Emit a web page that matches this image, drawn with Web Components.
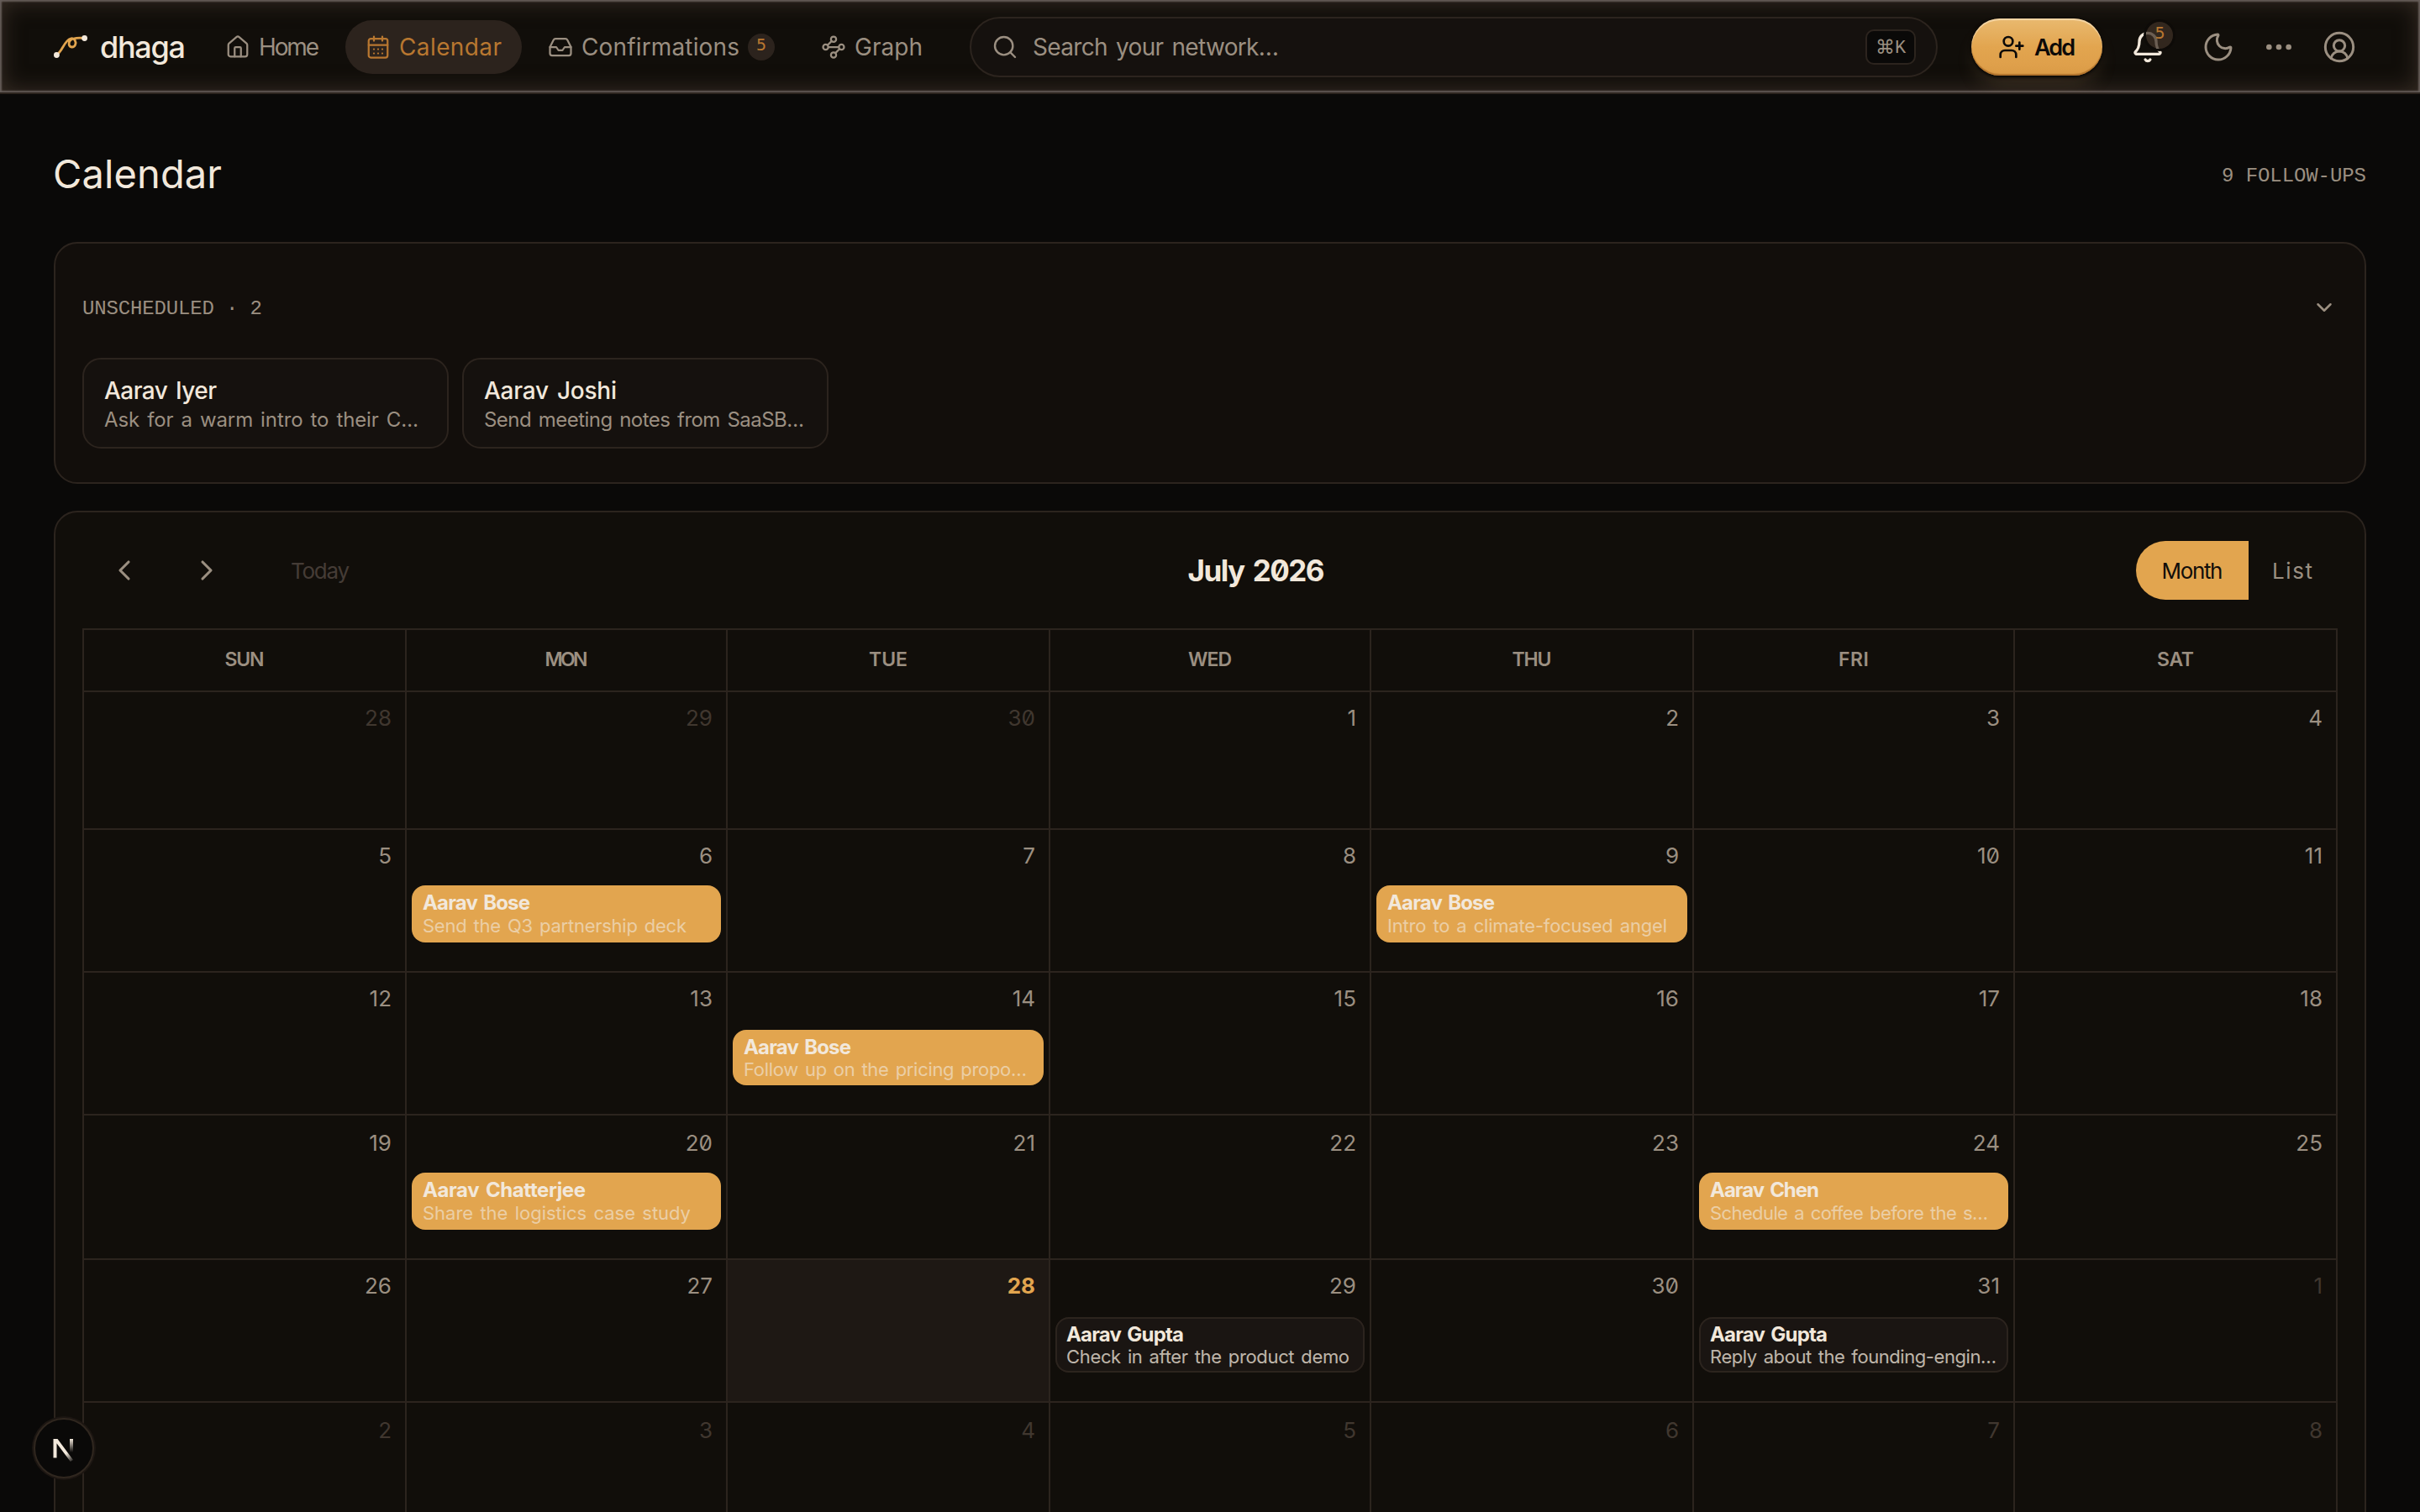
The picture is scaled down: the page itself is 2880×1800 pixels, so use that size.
<!DOCTYPE html>
<html lang="en">
<head>
<meta charset="utf-8">
<title>dhaga - Calendar</title>
<style>
  :root {
    --bg: #0a0908;
    --card: #110e0a;
    --raised: #15110e;
    --line: #2c241e;
    --text: #f2e8db;
    --muted: #9b8f81;
    --faint: #40372f;
    --amber: #e2a54f;
    --amber-dim: #b87730;
  }
  html, body {
    margin: 0;
    height: 1800px;
    overflow: hidden;
    background: var(--bg);
    color: var(--text);
    font-family: Inter, "Liberation Sans", sans-serif;
    font-feature-settings: "zero";
  }
</style>
</head>
<body>
<dhaga-app></dhaga-app>

<script>
const ICONS = {
  home: '<path d="M15 21v-8a1 1 0 0 0-1-1h-4a1 1 0 0 0-1 1v8"/><path d="M3 10a2 2 0 0 1 .709-1.528l7-5.999a2 2 0 0 1 2.582 0l7 5.999A2 2 0 0 1 21 10v9a2 2 0 0 1-2 2H5a2 2 0 0 1-2-2z"/>',
  calendar: '<path d="M8 2v4M16 2v4"/><rect width="18" height="18" x="3" y="4" rx="2"/><path d="M3 10h18M8 14h.01M12 14h.01M16 14h.01M8 18h.01M12 18h.01M16 18h.01"/>',
  inbox: '<path d="M22 12h-6l-2 3h-4l-2-3H2"/><path d="M5.45 5.11 2 12v6a2 2 0 0 0 2 2h16a2 2 0 0 0 2-2v-6l-3.45-6.89A2 2 0 0 0 16.76 4H7.24a2 2 0 0 0-1.79 1.11z"/>',
  graph: '<circle cx="12" cy="4.5" r="2.5"/><path d="m10.2 6.3-3.9 3.9"/><circle cx="4.5" cy="12" r="2.5"/><path d="M7 12h10"/><circle cx="19.5" cy="12" r="2.5"/><path d="m13.8 17.7 3.9-3.9"/><circle cx="12" cy="19.5" r="2.5"/>',
  search: '<path d="m21 21-4.34-4.34"/><circle cx="11" cy="11" r="8"/>',
  userPlus: '<path d="M16 21v-2a4 4 0 0 0-4-4H6a4 4 0 0 0-4 4v2"/><circle cx="9" cy="7" r="4"/><path d="M19 8v6M22 11h-6"/>',
  bell: '<path d="M10.268 21a2 2 0 0 0 3.464 0"/><path d="M3.262 15.326A1 1 0 0 0 4 17h16a1 1 0 0 0 .74-1.673C19.41 13.956 18 12.499 18 8A6 6 0 0 0 6 8c0 4.499-1.411 5.956-2.738 7.326"/>',
  moon: '<path d="M20.985 12.486a9 9 0 1 1-9.473-9.472c.405-.022.617.46.402.803a6 6 0 0 0 8.268 8.268c.344-.215.825-.004.803.401"/>',
  dots: '<circle cx="12" cy="12" r="1"/><circle cx="19" cy="12" r="1"/><circle cx="5" cy="12" r="1"/>',
  user: '<path d="M17.925 20.056a6 6 0 0 0-11.851.001"/><circle cx="12" cy="11" r="4"/><circle cx="12" cy="12" r="10"/>',
  left: '<path d="m15 18-6-6 6-6"/>',
  right: '<path d="m9 18 6-6-6-6"/>',
  down: '<path d="m6 9 6 6 6-6"/>'
};

class UiIcon extends HTMLElement {
  constructor() {
    super();
    this.attachShadow({ mode: 'open' });
  }
  connectedCallback() {
    const size = this.getAttribute('size') || 30;
    const stroke = this.getAttribute('stroke') || 1.8;
    this.shadowRoot.innerHTML = `
      <style>
        :host { display: block; flex: none; width: ${size}px; height: ${size}px; }
        svg { display: block; }
      </style>
      <svg width="${size}" height="${size}" viewBox="0 0 24 24" fill="none" stroke="currentColor"
        stroke-width="${stroke}" stroke-linecap="round" stroke-linejoin="round">${ICONS[this.getAttribute('name')]}</svg>`;
  }
}
customElements.define('ui-icon', UiIcon);

// One line of text tracked out (or in) to fill a given width
class FitText extends HTMLElement {
  constructor() {
    super();
    this.attachShadow({ mode: 'open' });
    this.shadowRoot.innerHTML = `
      <style>
        :host { display: block; flex: none; white-space: nowrap; }
        span { display: inline-block; word-spacing: var(--word-gap, .1em); }
      </style>
      <span><slot></slot></span>`;
  }
  connectedCallback() {
    const width = Number(this.getAttribute('w'));
    const span = this.shadowRoot.querySelector('span');
    const count = this.textContent.length;
    const natural = span.getBoundingClientRect().width;
    span.style.letterSpacing = `${(width - natural) / (count - 1)}px`;
    this.style.width = `${width}px`;
  }
}
customElements.define('fit-text', FitText);

class NavItem extends HTMLElement {
  constructor() {
    super();
    this.attachShadow({ mode: 'open' });
  }
  connectedCallback() {
    const badge = this.getAttribute('badge');
    this.shadowRoot.innerHTML = `
      <style>
        :host {
          display: flex; align-items: center; gap: 10px; height: 64px; padding: 0 24px;
          border-radius: 32px; color: var(--muted); font-size: 28px; line-height: 40px;
        }
        :host([active]) { background: #2c231d; color: var(--amber-dim); }
        b {
          width: 32px; height: 32px; border-radius: 50%; background: #2c231d; color: var(--amber-dim);
          font: 500 20px/27px "DejaVu Sans Mono", monospace; text-align: center;
        }
      </style>
      <ui-icon name="${this.getAttribute('icon')}"></ui-icon>
      <fit-text w="${this.getAttribute('w')}">${this.getAttribute('label')}</fit-text>
      ${badge ? `<b>${badge}</b>` : ''}`;
  }
}
customElements.define('nav-item', NavItem);

class TopBar extends HTMLElement {
  constructor() {
    super();
    this.attachShadow({ mode: 'open' });
  }
  connectedCallback() {
    this.shadowRoot.innerHTML = `
      <style>
        :host {
          display: flex; align-items: center; box-sizing: border-box; height: 112px; overflow: hidden;
          padding: 2px 64px 0; border-bottom: 2px solid var(--line); background: #110e0a;
          box-shadow: inset 0 0 2px 2px rgba(122, 112, 110, .75), inset 0 0 26px 3px rgba(84, 68, 56, .55);
        }
        .brand { display: flex; align-items: center; gap: 15px; font-size: 36px; line-height: 44px; font-weight: 500; }
        nav { display: flex; gap: 7px; margin-left: 23px; margin-right: -2px; }
        .search {
          flex: 1; display: flex; align-items: center; box-sizing: border-box; height: 72px; margin-left: 34px;
          padding: 0 24px; border: 2px solid var(--line); border-radius: 36px; background: var(--raised);
          color: var(--muted); font-size: 28px;
        }
        .search fit-text { margin-left: 17px; }
        kbd {
          display: flex; align-items: center; justify-content: center; box-sizing: border-box; width: 60px; height: 42px;
          margin-left: auto; border: 2px solid var(--line); border-radius: 10px; background: var(--bg);
          font: 22px/34px "Liberation Mono", monospace;
        }
        kbd span { font: 23px/34px "DejaVu Sans", sans-serif; }
        kbd i { font-style: normal; padding-top: 3px; }
        .add {
          display: flex; align-items: center; gap: 11px; box-sizing: border-box; width: 156px; height: 68px;
          margin-left: 40px; padding-left: 32px; border-radius: 34px; color: #0c0a08; font-size: 27px; font-weight: 600;
          background: linear-gradient(#e9b96f, #e2a54f 50%, #dfa04b 80%, #d99a46);
          box-shadow: inset 0 2px 1px rgba(255, 240, 215, .55), inset 0 -2px 1px rgba(160, 98, 34, .7),
            0 2px 4px #000, 0 16px 26px -8px rgba(200, 160, 110, .22);
        }
        .btn { position: relative; display: flex; align-items: center; justify-content: center; width: 64px; height: 64px; margin-left: 8px; color: var(--muted); }
        .bell { margin-left: 22px; color: var(--text); }
        .moon { margin-left: 20px; }
        .count {
          position: absolute; left: 30px; top: 2px; width: 32px; height: 32px; border-radius: 50%;
          background: rgba(62, 48, 38, .75); box-shadow: 0 0 0 3px #0e0b08; color: var(--amber-dim);
          font: 500 20px/27px "DejaVu Sans Mono", monospace; text-align: center; text-indent: 1px;
        }
      </style>
      <div class="brand">
        <svg width="40" height="30" viewBox="0 0 40 30" fill="none">
          <path d="M3 24.5C10 21 12.5 7 20 5c5-1.300 7 4 5.500 7.500c-1.600 3.600-7 3.300-7.400-.8C17.500 4.500 27 3.500 37 4.500" stroke="#e1a44e" stroke-width="2.800" stroke-linecap="round"/>
          <circle cx="3.400" cy="24.500" r="3.400" fill="#f2e8db"/><circle cx="36.600" cy="4.500" r="3.400" fill="#f2e8db"/>
        </svg>
        <fit-text w="102">dhaga</fit-text>
      </div>
      <nav>
        <nav-item icon="home" label="Home" w="72"></nav-item>
        <nav-item icon="calendar" label="Calendar" w="122" active></nav-item>
        <nav-item icon="inbox" label="Confirmations" w="188" badge="5"></nav-item>
        <nav-item icon="graph" label="Graph" w="81"></nav-item>
      </nav>
      <div class="search">
        <ui-icon name="search" size="32"></ui-icon>
        <fit-text w="293">Search your network…</fit-text>
        <kbd><span>⌘</span><i>K</i></kbd>
      </div>
      <div class="add"><ui-icon name="userPlus" size="32" stroke="2"></ui-icon><fit-text w="49">Add</fit-text></div>
      <div class="btn bell"><ui-icon name="bell" size="40" stroke="2"></ui-icon><span class="count">5</span></div>
      <div class="btn moon"><ui-icon name="moon" size="40"></ui-icon></div>
      <div class="btn"><ui-icon name="dots" size="40" stroke="2"></ui-icon></div>
      <div class="btn"><ui-icon name="user" size="40"></ui-icon></div>`;
  }
}
customElements.define('top-bar', TopBar);

class PersonCard extends HTMLElement {
  constructor() {
    super();
    this.attachShadow({ mode: 'open' });
    this.shadowRoot.innerHTML = `
      <style>
        :host {
          display: block; box-sizing: border-box; width: 436px; height: 108px; padding: 19px 24px 0;
          border: 2px solid var(--line); border-radius: 22px; background: var(--raised);
        }
        .name { font-size: 28px; line-height: 36px; font-weight: 500; }
        .note { font-size: 24px; line-height: 34px; color: var(--muted); }
      </style>
      <div class="name"><slot name="name"></slot></div>
      <div class="note"><slot></slot></div>`;
  }
}
customElements.define('person-card', PersonCard);

class UnscheduledPanel extends HTMLElement {
  constructor() {
    super();
    this.attachShadow({ mode: 'open' });
  }
  connectedCallback() {
    this.shadowRoot.innerHTML = `
      <style>
        :host {
          display: block; box-sizing: border-box; height: 288px; padding: 60px 32px 0;
          border: 2px solid var(--line); border-radius: 28px; background: #120e0b;
        }
        header {
          display: flex; align-items: center; justify-content: space-between; height: 32px; padding-right: 1px;
          font: 24px/32px "Liberation Mono", monospace; color: var(--muted); --word-gap: 0;
        }
        header fit-text { padding-top: 3px; }
        .row { display: flex; gap: 16px; margin-top: 44px; }
      </style>
      <header><fit-text w="214">UNSCHEDULED · 2</fit-text><ui-icon name="down" size="30" stroke="2"></ui-icon></header>
      <div class="row">
        <person-card><fit-text slot="name" w="134">Aarav Iyer</fit-text><fit-text w="374">Ask for a warm intro to their C…</fit-text></person-card>
        <person-card><fit-text slot="name" w="158">Aarav Joshi</fit-text><fit-text w="381">Send meeting notes from SaaSB…</fit-text></person-card>
      </div>`;
  }
}
customElements.define('unscheduled-panel', UnscheduledPanel);

class CalEvent extends HTMLElement {
  constructor() {
    super();
    this.attachShadow({ mode: 'open' });
  }
  connectedCallback() {
    this.shadowRoot.innerHTML = `
      <style>
        :host {
          display: block; box-sizing: border-box; height: 66px; margin: 0 6px; padding: 6px 13px 0;
          border-radius: 16px; background: var(--amber); color: #f2e8db;
        }
        :host([tall]) { height: 68px; }
        :host([upcoming]) { background: #1a1512; box-shadow: inset 0 0 0 2px var(--line); }
        .name { font-size: 24px; line-height: 30px; font-weight: 700; }
        .note { font-size: 22px; line-height: 22px; opacity: .62; }
        :host([tall]) .note { margin-top: 1px; }
        :host([upcoming]) .note { opacity: .76; }
      </style>
      <div class="name"><slot name="name"></slot></div>
      <div class="note"><slot></slot></div>`;
  }
}
customElements.define('cal-event', CalEvent);

class CalDay extends HTMLElement {
  constructor() {
    super();
    this.attachShadow({ mode: 'open' });
    this.shadowRoot.innerHTML = `
      <style>
        :host { display: block; box-sizing: border-box; min-width: 0; border-right: 2px solid var(--line); border-bottom: 2px solid var(--line); }
        :host([last]) { border-right: 0; }
        .num {
          height: 68px; padding: 14px 16px 0 0; box-sizing: border-box; text-align: right;
          font-size: 26px; line-height: 34px; color: var(--muted);
        }
        :host([early]) .num { height: 66px; }
        :host([low]) .num { padding-top: 16px; }
        :host([outside]) .num { color: var(--faint); }
        :host([today]) { background: #1e1814; }
        :host([today]) .num { color: var(--amber); font-weight: 700; }
      </style>
      <div class="num"></div><slot></slot>`;
  }
  connectedCallback() {
    this.shadowRoot.querySelector('.num').textContent = this.getAttribute('n');
  }
}
customElements.define('cal-day', CalDay);

const EVENTS = {
  '7-6': ['Aarav Bose', 128, 'Send the Q3 partnership deck', 314],
  '7-9': ['Aarav Bose', 128, 'Intro to a climate-focused angel', 333],
  '7-14': ['Aarav Bose', 128, 'Follow up on the pricing propo…', 337],
  '7-20': ['Aarav Chatterjee', 194, 'Share the logistics case study', 319],
  '7-24': ['Aarav Chen', 130, 'Schedule a coffee before the s…', 331],
  '7-29': ['Aarav Gupta', 140, 'Check in after the product demo', 337],
  '7-31': ['Aarav Gupta', 140, 'Reply about the founding-engin…', 341]
};

const WEEKDAYS = [['SUN', 47], ['MON', 51], ['TUE', 46], ['WED', 52], ['THU', 47], ['FRI', 36], ['SAT', 44]];

class MonthCalendar extends HTMLElement {
  constructor() {
    super();
    this.attachShadow({ mode: 'open' });
  }

  days() {
    const start = new Date(2026, 5, 28);
    let html = '';
    for (let i = 0; i < 42; i++) {
      const date = new Date(start.getFullYear(), start.getMonth(), start.getDate() + i);
      const month = date.getMonth() + 1;
      const n = date.getDate();
      const row = Math.floor(i / 7);
      const event = EVENTS[`${month}-${n}`];
      const flags = [
        month !== 7 ? 'outside' : '',
        month === 7 && n === 28 ? 'today' : '',
        i % 7 === 6 ? 'last' : '',
        row === 1 ? 'early' : '',
        row === 3 || row === 5 ? 'low' : ''
      ].join(' ');
      const state = `${row === 1 || row === 3 ? 'tall' : ''} ${n > 28 ? 'upcoming' : ''}`;
      html += `<cal-day n="${n}" ${flags}>${event ? `
        <cal-event ${state}><fit-text slot="name" w="${event[1]}">${event[0]}</fit-text><fit-text w="${event[3]}">${event[2]}</fit-text></cal-event>` : ''}</cal-day>`;
    }
    return html;
  }

  connectedCallback() {
    this.shadowRoot.innerHTML = `
      <style>
        :host {
          display: block; box-sizing: border-box; height: 1300px; padding: 34px 32px 0;
          border: 2px solid var(--line); border-radius: 28px; background: var(--card);
        }
        .bar { display: flex; align-items: center; justify-content: space-between; height: 70px; margin-bottom: 34px; font-size: 26px; color: var(--muted); }
        .group { display: flex; align-items: center; }
        .step { display: flex; justify-content: center; width: 98px; }
        .step:first-child { margin-left: 1px; }
        .today { padding: 0 32px 0 51px; color: #453c36; }
        h2 { margin: 0; font-size: 35px; font-weight: 700; color: var(--text); }
        .tab { display: flex; align-items: center; justify-content: center; box-sizing: border-box; height: 70px; width: 134px; }
        .tab.on { border-radius: 35px 0 0 35px; background: var(--amber); color: #110e0a; }
        .tab.list { width: 106px; padding-right: 2px; }
        .grid {
          display: grid; grid-template-columns: 384px 382px 384px 382px 384px 382px 382px;
          grid-template-rows: 74px 164px 170px 170px 172px 170px 172px;
          box-sizing: border-box; width: 2684px; border: 2px solid var(--line);
        }
        .head {
          display: flex; align-items: center; justify-content: center; border-right: 2px solid var(--line);
          border-bottom: 2px solid var(--line); font-size: 23px; font-weight: 600; color: var(--muted); padding-bottom: 3px;
        }
        .head:nth-child(7) { border-right: 0; }
      </style>
      <div class="bar">
        <div class="group">
          <div class="step"><ui-icon name="left" size="40" stroke="1.9"></ui-icon></div>
          <div class="step"><ui-icon name="right" size="40" stroke="1.9"></ui-icon></div>
          <div class="today"><fit-text w="70">Today</fit-text></div>
        </div>
        <h2><fit-text w="163">July 2026</fit-text></h2>
        <div class="group">
          <div class="tab on"><fit-text w="73">Month</fit-text></div>
          <div class="tab list"><fit-text w="48">List</fit-text></div>
        </div>
      </div>
      <div class="grid">
        ${WEEKDAYS.map(([name, w]) => `<div class="head"><fit-text w="${w}">${name}</fit-text></div>`).join('')}
        ${this.days()}
      </div>`;
  }
}
customElements.define('month-calendar', MonthCalendar);

class DevBadge extends HTMLElement {
  constructor() {
    super();
    this.attachShadow({ mode: 'open' });
    this.shadowRoot.innerHTML = `
      <style>
        :host {
          position: absolute; left: 40px; top: 1688px; width: 72px; height: 72px; box-sizing: border-box;
          border: 2px solid #30271f; border-radius: 50%; background: var(--bg); box-shadow: 0 0 0 2px #1c1612;
        }
        svg { display: block; }
      </style>
      <svg width="68" height="68" viewBox="0 0 68 68" fill="none">
        <defs>
          <linearGradient id="d" gradientUnits="userSpaceOnUse" x1="37" y1="40" x2="45" y2="51"><stop stop-color="#f2e8db"/><stop offset="1" stop-color="#f2e8db" stop-opacity="0"/></linearGradient>
          <linearGradient id="v" gradientUnits="userSpaceOnUse" x1="0" y1="23" x2="0" y2="39"><stop stop-color="#f2e8db"/><stop offset="1" stop-color="#f2e8db" stop-opacity="0"/></linearGradient>
        </defs>
        <path d="M21.500 23h5L45 48l-3.200 2L25.500 28.300V45.500h-4z" fill="url(#d)"/>
        <rect x="41" y="23" width="4" height="16" fill="url(#v)"/>
      </svg>`;
  }
}
customElements.define('dev-badge', DevBadge);

class DhagaApp extends HTMLElement {
  constructor() {
    super();
    this.attachShadow({ mode: 'open' });
  }
  connectedCallback() {
    this.shadowRoot.innerHTML = `
      <style>
        :host { display: block; position: relative; width: 2880px; height: 1800px; overflow: hidden; }
        main { display: flex; flex-direction: column; padding: 64px 64px 0; }
        .title { display: flex; align-items: center; justify-content: space-between; height: 64px; margin-bottom: 48px; }
        h1 { margin: 0 0 0 -1px; font-size: 47px; line-height: 60px; font-weight: 400; padding-bottom: 2px; }
        .count { font: 24px/32px "Liberation Mono", monospace; color: var(--muted); padding-top: 3px; --word-gap: 0; }
        month-calendar { margin-top: 32px; }
      </style>
      <top-bar></top-bar>
      <main>
        <div class="title">
          <h1><fit-text w="201">Calendar</fit-text></h1>
          <div class="count"><fit-text w="172">9 FOLLOW-UPS</fit-text></div>
        </div>
        <unscheduled-panel></unscheduled-panel>
        <month-calendar></month-calendar>
      </main>
      <dev-badge></dev-badge>`;
  }
}
customElements.define('dhaga-app', DhagaApp);
</script>
</body>
</html>
